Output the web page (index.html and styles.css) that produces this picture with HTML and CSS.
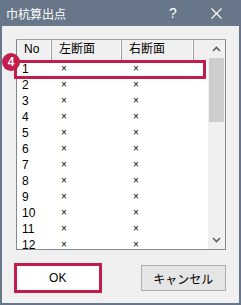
FILE: index.html
```html
<!DOCTYPE html>
<html lang="ja">
<head>
  <meta charset="UTF-8">
  <title>巾杭算出点</title>
  <link rel="stylesheet" href="styles.css">
</head>
<body>

  <div class="window">
    <div class="titlebar">
      <span class="title">巾杭算出点</span>
      <span class="help">?</span>
      <svg class="close" width="11" height="11" viewBox="0 0 11 11">
        <path d="M0.5 0.5 L10.5 10.5 M10.5 0.5 L0.5 10.5" stroke="#fff" stroke-width="1.1" fill="none"/>
      </svg>
    </div>

    <div class="content">
      <div class="list">
        <div class="list-body">
          <div class="row header">
            <div class="cell">No</div>
            <div class="cell">左断面</div>
            <div class="cell">右断面</div>
            <div class="cell"></div>
          </div>
          <div class="row"><div class="cell">1</div><div class="cell x">×</div><div class="cell x">×</div></div>
          <div class="row"><div class="cell">2</div><div class="cell x">×</div><div class="cell x">×</div></div>
          <div class="row"><div class="cell">3</div><div class="cell x">×</div><div class="cell x">×</div></div>
          <div class="row"><div class="cell">4</div><div class="cell x">×</div><div class="cell x">×</div></div>
          <div class="row"><div class="cell">5</div><div class="cell x">×</div><div class="cell x">×</div></div>
          <div class="row"><div class="cell">6</div><div class="cell x">×</div><div class="cell x">×</div></div>
          <div class="row"><div class="cell">7</div><div class="cell x">×</div><div class="cell x">×</div></div>
          <div class="row"><div class="cell">8</div><div class="cell x">×</div><div class="cell x">×</div></div>
          <div class="row"><div class="cell">9</div><div class="cell x">×</div><div class="cell x">×</div></div>
          <div class="row"><div class="cell">10</div><div class="cell x">×</div><div class="cell x">×</div></div>
          <div class="row"><div class="cell">11</div><div class="cell x">×</div><div class="cell x">×</div></div>
          <div class="row"><div class="cell">12</div><div class="cell x">×</div><div class="cell x">×</div></div>
        </div>

        <div class="scrollbar">
          <svg class="arrow" width="9" height="6" viewBox="0 0 9 6">
            <path d="M1 5 L4.5 1.5 L8 5" stroke="#606060" stroke-width="1.6" fill="none"/>
          </svg>
          <div class="track">
            <div class="thumb"></div>
          </div>
          <svg class="arrow" width="9" height="6" viewBox="0 0 9 6">
            <path d="M1 1 L4.5 4.5 L8 1" stroke="#606060" stroke-width="1.6" fill="none"/>
          </svg>
        </div>

        <!-- annotation over the first row -->
        <div class="highlight"></div>
        <div class="badge">4</div>
      </div>

      <div class="buttons">
        <button class="btn btn-ok">OK</button>
        <button class="btn">キャンセル</button>
      </div>
    </div>
  </div>

</body>
</html>
```

FILE: styles.css
```css
:root {
  --frame: #677789;
  --face: #f0f0f0;
  --accent: #c31d4b;
  --line: #a0a0a0;
  --text: #000000;
}

* {
  box-sizing: border-box;
  margin: 0;
  padding: 0;
}

body {
  font-family: 'Liberation Sans', 'Noto Sans CJK JP', sans-serif;
  font-size: 12px;
  color: var(--text);
  background: var(--face);
}

.window {
  width: 241px;
  height: 305px;
  background: var(--frame);
  padding: 0 2px 2px 2px;
  display: flex;
  flex-direction: column;
}

.titlebar {
  height: 26px;
  display: flex;
  align-items: center;
  color: #ffffff;
  padding-left: 6px;
  margin: 0 -2px;
}

.title {
  font-family: 'Noto Sans CJK JP', sans-serif;
  font-size: 12px;
  flex: 1;
}

.help {
  font-size: 14px;
  width: 42px;
  margin-right: 0;
}

.close {
  margin-right: 19px;
}

.content {
  flex: 1;
  background: var(--face);
  padding: 13px 13px 0 14px;
}

.list {
  position: relative;
  height: 211px;
  border: 1px solid #828790;
  border-top-color: #a0a0a0;
  background: #ffffff;
  display: flex;
}

.list-body {
  flex: 1;
  overflow: hidden;
}

.row {
  display: grid;
  grid-template-columns: 35px 70px 72px 14px;
  height: 16px;
  align-items: center;
}

.row .cell {
  padding-left: 5px;
  line-height: 16px;
  white-space: nowrap;
}

.row .cell.x {
  font-size: 10px;
  padding-left: 9px;
}

.row .cell.x + .cell.x {
  padding-left: 11px;
}

.header {
  height: 21px;
  background: var(--face);
}

.header .cell {
  height: 21px;
  line-height: 19px;
  padding-left: 7px;
  border-right: 1px solid var(--line);
  box-shadow: inset -1px 0 0 #ffffff;
}

.header .cell:last-child {
  border-right: none;
  box-shadow: none;
}

.scrollbar {
  width: 17px;
  background: var(--face);
  display: flex;
  flex-direction: column;
  align-items: center;
}

.arrow {
  margin: 6px 0;
  flex-shrink: 0;
}

.track {
  flex: 1;
  width: 100%;
  padding: 0 1px;
}

.thumb {
  height: 64px;
  background: #cdcdcd;
}

.highlight {
  position: absolute;
  left: -3px;
  top: 20px;
  width: 192px;
  height: 19px;
  border: 3px solid var(--accent);
}

.badge {
  position: absolute;
  left: -15px;
  top: 13px;
  width: 18px;
  height: 18px;
  border-radius: 50%;
  background: var(--accent);
  color: #ffffff;
  font-weight: bold;
  font-size: 12px;
  line-height: 18px;
  text-align: center;
}

.buttons {
  display: flex;
  align-items: center;
  gap: 39px;
  margin: 13px 0 0 -2px;
}

.btn {
  font-family: 'Liberation Sans', 'Noto Sans CJK JP', sans-serif;
  font-size: 12px;
  color: var(--text);
  height: 26px;
  width: 87px;
  background: #e5e5e5;
  border: 1px solid #adadad;
}

.btn-ok {
  width: 89px;
  height: 30px;
  background: #ffffff;
  border: 3px solid var(--accent);
}
```
